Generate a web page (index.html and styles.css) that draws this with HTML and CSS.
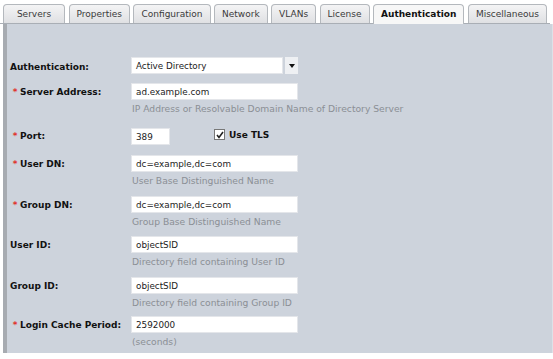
FILE: index.html
```html
<!DOCTYPE html>
<html>
<head>
<meta charset="utf-8">
<link rel="stylesheet" href="styles.css">
</head>
<body>
<div class="tabs">
  <div class="tab tab-first">Servers</div>
  <div class="tab">Properties</div>
  <div class="tab">Configuration</div>
  <div class="tab">Network</div>
  <div class="tab">VLANs</div>
  <div class="tab">License</div>
  <div class="tab tab-active">Authentication</div>
  <div class="tab">Miscellaneous</div>
</div>
<div class="panel">
  <div class="row row-auth">
    <div class="label">Authentication:</div>
    <div class="field">
      <div class="select-wrap">
        <div class="select">Active Directory</div>
        <div class="select-btn"><span class="arrow"></span></div>
      </div>
    </div>
  </div>
  <div class="row row-server">
    <div class="label"><span class="req">*</span>Server Address:</div>
    <div class="field">
      <div class="input">ad.example.com</div>
      <div class="hint">IP Address or Resolvable Domain Name of Directory Server</div>
    </div>
  </div>
  <div class="row row-port">
    <div class="label"><span class="req">*</span>Port:</div>
    <div class="field field-inline">
      <div class="input input-small">389</div>
      <label class="check">
        <span class="box"><svg width="8" height="8" viewBox="0 0 8 8"><path d="M1 4 L3 6.5 L7 1" fill="none" stroke="#222" stroke-width="1.6"/></svg></span>
        <span class="check-text">Use TLS</span>
      </label>
    </div>
  </div>
  <div class="row row-wide">
    <div class="label"><span class="req">*</span>User DN:</div>
    <div class="field">
      <div class="input">dc=example,dc=com</div>
      <div class="hint">User Base Distinguished Name</div>
    </div>
  </div>
  <div class="row">
    <div class="label"><span class="req">*</span>Group DN:</div>
    <div class="field">
      <div class="input">dc=example,dc=com</div>
      <div class="hint">Group Base Distinguished Name</div>
    </div>
  </div>
  <div class="row row-wide">
    <div class="label">User ID:</div>
    <div class="field">
      <div class="input">objectSID</div>
      <div class="hint">Directory field containing User ID</div>
    </div>
  </div>
  <div class="row row-groupid">
    <div class="label">Group ID:</div>
    <div class="field">
      <div class="input">objectSID</div>
      <div class="hint">Directory field containing Group ID</div>
    </div>
  </div>
  <div class="row row-last">
    <div class="label"><span class="req">*</span>Login Cache Period:</div>
    <div class="field">
      <div class="input">2592000</div>
      <div class="hint">(seconds)</div>
    </div>
  </div>
</div>
</body>
</html>
```
FILE: styles.css
```css
html, body {
  margin: 0;
  padding: 0;
  background: #ffffff;
  font-family: "DejaVu Sans", Verdana, sans-serif;
  font-size: 9px;
  color: #222;
}
.tabs {
  display: flex;
  gap: 3.5px;
  padding: 4px 0 0 3px;
  height: 19px;
  align-items: flex-end;
  border-bottom: 1px solid #a9aeb5;
  width: 547px;
}
.tab {
  height: 18px;
  line-height: 18px;
  padding: 0 7px;
  border: 1px solid #b4b8bd;
  border-bottom: none;
  border-radius: 4px 4px 0 0;
  background: linear-gradient(#f4f4f5, #dfe0e3);
  color: #3a3a3a;
  white-space: nowrap;
  text-align: center;
}
.tab-first {
  min-width: 46px;
}
.tab-active {
  background: #f7f7f7;
  font-weight: bold;
  color: #111;
  height: 19px;
  line-height: 19px;
  margin-bottom: -1px;
}
.panel {
  margin-left: 3px;
  width: 542px;
  background: #cdd3dc;
  border-left: 4px solid #a7abb1;
  border-right: 2px solid #dde1e7;
  padding: 33px 0 4px 3px;
}
.row {
  display: grid;
  grid-template-columns: 121px 1fr;
  margin-bottom: 7px;
}
.row-auth { margin-bottom: 8px; }
.row-server { margin-bottom: 11px; }
.row-port { margin-bottom: 10px; }
.row-wide { margin-bottom: 8px; }
.row-groupid { margin-bottom: 6px; }
.row-last { margin-bottom: 0; }
.label {
  font-weight: bold;
  line-height: 17px;
  padding-top: 1px;
  color: #111;
  white-space: nowrap;
}
.row-auth .label {
  padding-top: 2px;
  line-height: 16px;
}
.req {
  color: #e0302a;
  display: inline-block;
  width: 10px;
  text-align: center;
  font-weight: bold;
}
.field-inline {
  display: flex;
  align-items: center;
}
.input {
  height: 17px;
  line-height: 17px;
  font-size: 8.8px;
  background: #fff;
  padding: 0 0 0 4px;
  border: 1px solid #e4e6ea;
  box-sizing: border-box;
  width: 167px;
  color: #222;
}
.input-small {
  width: 39px;
}
.hint {
  color: #8b8f95;
  font-size: 9.2px;
  line-height: 15px;
  padding-top: 1px;
  padding-left: 1px;
}
.select-wrap {
  display: flex;
  gap: 2px;
}
.select {
  width: 152px;
  height: 17px;
  line-height: 17px;
  font-size: 8.8px;
  background: #fff;
  padding-left: 4px;
  box-sizing: border-box;
  border: 1px solid #e4e6ea;
  color: #222;
}
.select-btn {
  width: 13px;
  height: 17px;
  background: #eef0f3;
  display: flex;
  align-items: center;
  justify-content: center;
}
.arrow {
  width: 0;
  height: 0;
  border-left: 3.5px solid transparent;
  border-right: 3.5px solid transparent;
  border-top: 4px solid #111;
}
.check {
  display: flex;
  align-items: center;
  margin-left: 44px;
  gap: 4px;
  margin-top: -3px;
}
.box {
  width: 9px;
  height: 9px;
  background: #fff;
  border: 1px solid #777;
  display: flex;
  align-items: center;
  justify-content: center;
}
.check-text {
  font-weight: bold;
  color: #111;
}
```
